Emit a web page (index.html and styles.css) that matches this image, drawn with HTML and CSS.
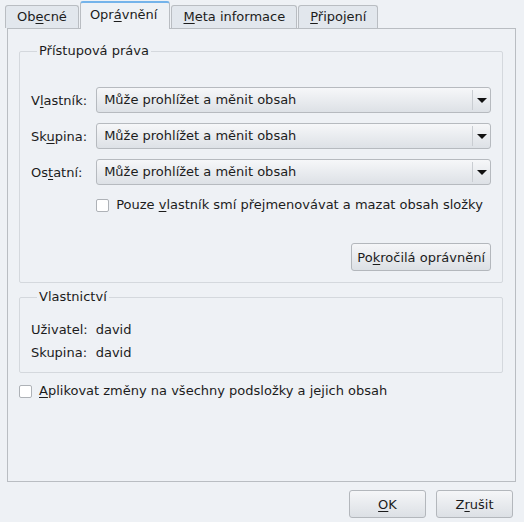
FILE: index.html
```html
<!DOCTYPE html>
<html lang="cs">
<head>
    <meta charset="UTF-8">
    <title>Vlastnosti</title>
    <link rel="stylesheet" href="styles.css">
</head>
<body>

<div class="dialog">
    <div class="tabs">
        <div class="tab">Ob<u>e</u>cné</div>
        <div class="tab active">Opr<u>á</u>vnění</div>
        <div class="tab"><u>M</u>eta informace</div>
        <div class="tab"><u>P</u>řipojení</div>
    </div>

    <div class="panel">
        <fieldset class="group perms">
            <legend>Přístupová práva</legend>
            <div class="perm-grid">
                <label>V<u>l</u>astník:</label>
                <div class="combo">Může prohlížet a měnit obsah<span class="arrow"></span></div>

                <label>Sk<u>u</u>pina:</label>
                <div class="combo">Může prohlížet a měnit obsah<span class="arrow"></span></div>

                <label>Os<u>t</u>atní:</label>
                <div class="combo">Může prohlížet a měnit obsah<span class="arrow"></span></div>

                <div class="check-row owner-only">
                    <span class="checkbox"></span>
                    <span>Pouze <u>v</u>lastník smí přejmenovávat a mazat obsah složky</span>
                </div>
            </div>
            <div class="adv-row">
                <button class="btn">Po<u>k</u>ročilá oprávnění</button>
            </div>
        </fieldset>

        <fieldset class="group owner">
            <legend>Vlastnictví</legend>
            <div class="owner-grid">
                <span>Uživatel:</span><span>david</span>
                <span>Skupina:</span><span>david</span>
            </div>
        </fieldset>

        <div class="check-row apply">
            <span class="checkbox"></span>
            <span><u>A</u>plikovat změny na všechny podsložky a jejich obsah</span>
        </div>
    </div>

    <div class="buttons">
        <button class="btn wide"><u>O</u>K</button>
        <button class="btn wide">Z<u>r</u>ušit</button>
    </div>
</div>

</body>
</html>
```

FILE: styles.css
```css
body {
    margin: 0;
    background: #eef1f5;
    font-family: "DejaVu Sans", sans-serif;
    font-size: 13px;
    color: #1c1c1c;
}
u {
    text-decoration-thickness: 1px;
    text-underline-offset: 2px;
}
.dialog {
    padding: 2px 8px 0 7px;
}
.tabs {
    display: flex;
    align-items: flex-end;
    height: 26px;
    margin-left: -2px;
    position: relative;
    z-index: 1;
}
.tab {
    height: 22px;
    line-height: 22px;
    padding: 0 11px;
    background: #e2e7ed;
    border: 1px solid #b9bdc2;
    border-bottom: none;
    border-radius: 3px 3px 0 0;
    margin-right: 1px;
    white-space: nowrap;
}
.tab.active {
    height: 25px;
    line-height: 24px;
    background: #eef1f5;
    border-top: 2px solid #74b3ea;
    margin-bottom: -1px;
    padding: 0 12px 1px 9px;
}
.panel {
    box-sizing: border-box;
    border: 1px solid #b9bdc2;
    height: 454px;
    padding: 14px 12px 0 11px;
}
.group {
    border: 1px solid #d4d8dd;
    border-radius: 2px;
    margin: 0;
    padding: 0 11px;
}
.group legend {
    padding: 0 2px;
    margin-left: 6px;
    line-height: 16px;
}
.perms {
    padding-bottom: 11px;
}
.perm-grid {
    display: grid;
    grid-template-columns: auto 1fr;
    column-gap: 9px;
    row-gap: 10px;
    align-items: center;
    margin-top: 28px;
}
.combo {
    position: relative;
    height: 24px;
    line-height: 24px;
    padding-left: 7px;
    border: 1px solid #b6babf;
    border-radius: 3px;
    background: linear-gradient(#f6f7f9, #dde1e6);
}
.arrow {
    position: absolute;
    right: 0;
    top: 2px;
    bottom: 2px;
    width: 17px;
    border-left: 1px solid #c9cdd2;
}
.arrow::after {
    content: "";
    position: absolute;
    left: 4px;
    top: 8px;
    border-left: 5px solid transparent;
    border-right: 5px solid transparent;
    border-top: 5px solid #111;
}
.check-row {
    display: flex;
    align-items: center;
    gap: 7px;
    white-space: nowrap;
    line-height: 16px;
}
.owner-only {
    grid-column: 2;
    margin-top: 2px;
}
.checkbox {
    width: 11px;
    height: 11px;
    background: #fff;
    border: 1px solid #aeb2b7;
    border-radius: 2px;
    flex: none;
}
.adv-row {
    display: flex;
    justify-content: flex-end;
    margin-top: 30px;
}
.btn {
    font-family: "DejaVu Sans", sans-serif;
    font-size: 13px;
    color: #1c1c1c;
    height: 28px;
    padding: 0 5px;
    border: 1px solid #b3b7bc;
    border-radius: 3px;
    background: linear-gradient(#f5f6f8, #dce0e5);
}
.owner {
    margin-top: 6px;
    padding-bottom: 10px;
}
.owner-grid {
    display: grid;
    grid-template-columns: auto 1fr;
    column-gap: 8px;
    row-gap: 5px;
    line-height: 18px;
    margin-top: 16px;
}
.apply {
    margin-top: 10px;
}
.buttons {
    display: flex;
    justify-content: flex-end;
    gap: 10px;
    margin-top: 8px;
    padding-right: 3px;
}
.btn.wide {
    width: 77px;
}
```
